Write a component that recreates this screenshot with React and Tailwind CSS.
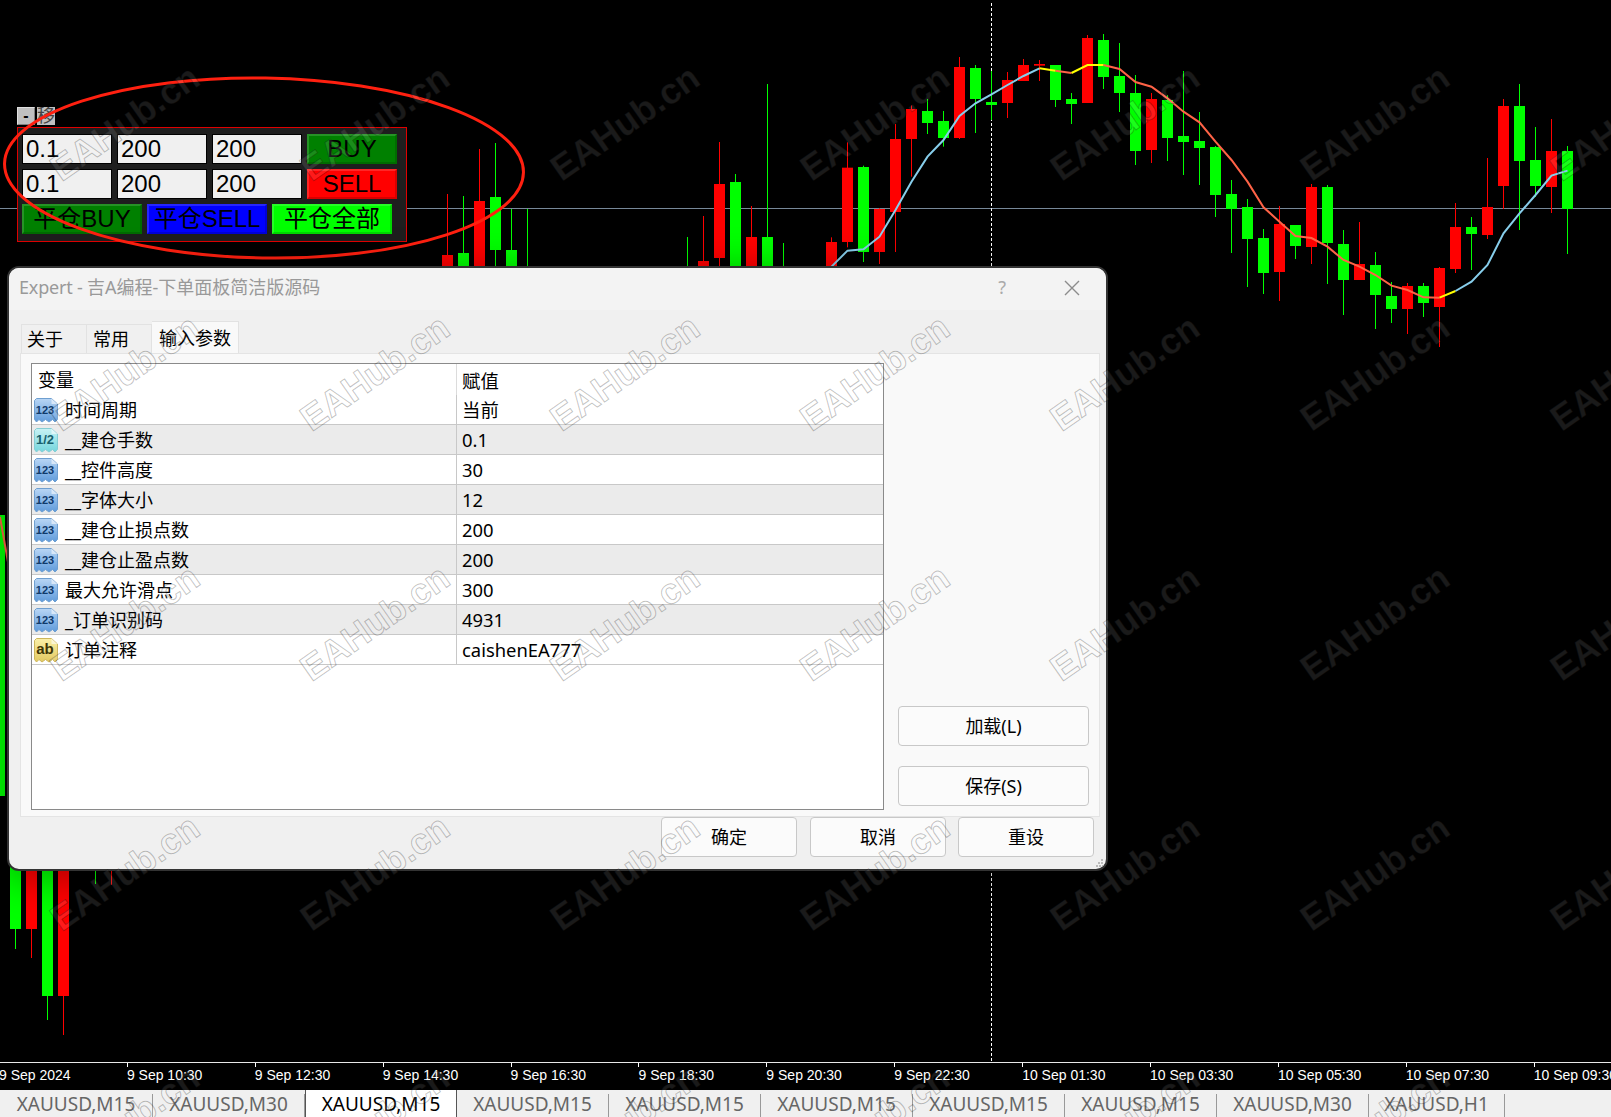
import React from 'react';

const UI_FONT = "font-['Noto_Sans','Noto_Sans_CJK_SC',sans-serif]";

// k = bar slot, one bar every 16px. [k, colour, body top, body bottom, wick top, wick bottom]
const leftBars = [
  [-1, 'g', 515, 796, 515, 796],
  [0, 'g', 860, 929, 860, 949],
  [1, 'r', 860, 929, 860, 958],
  [2, 'g', 860, 996, 860, 1020],
  [3, 'r', 860, 996, 860, 1035],
  [5, 'g', 860, 861, 860, 884],
  [6, 'r', 860, 861, 860, 885],
  [27, 'r', 255, 290, 194, 290],
  [28, 'g', 253, 290, 196, 290],
  [29, 'r', 201, 290, 149, 290],
  [30, 'g', 197, 250, 143, 290],
  [31, 'g', 250, 290, 209, 290],
  [32, 'g', 285, 290, 209, 290],
  [42, 'g', 285, 290, 237, 290],
  [43, 'r', 261, 290, 216, 290],
  [44, 'r', 184, 258, 142, 290],
  [45, 'g', 182, 290, 174, 290],
  [46, 'r', 237, 290, 206, 290],
  [47, 'g', 237, 290, 84, 290],
  [48, 'g', 285, 290, 243, 290],
];

// same shape, y values are x3 (read off a 3x crop), first one is k = 51
const rightBars = [
  ['r', 726, 860, 712, 860], ['r', 503, 726, 427, 742], ['g', 501, 756, 497, 786], ['r', 627, 756, 625, 792],
  ['r', 417, 636, 372, 756], ['r', 327, 417, 316, 530], ['g', 333, 369, 297, 402], ['g', 363, 414, 333, 440],
  ['r', 201, 414, 171, 417], ['g', 204, 297, 195, 399], ['g', 306, 315, 213, 360], ['r', 240, 309, 216, 354],
  ['r', 195, 243, 177, 243], ['r', 192, 197, 180, 243], ['g', 195, 300, 195, 321], ['g', 297, 312, 279, 372],
  ['r', 114, 309, 105, 309], ['g', 120, 231, 102, 267], ['g', 228, 279, 129, 336], ['g', 279, 453, 225, 495],
  ['r', 297, 450, 279, 489], ['g', 300, 414, 285, 483], ['g', 408, 426, 213, 525], ['g', 423, 444, 336, 555],
  ['g', 441, 585, 438, 651], ['g', 582, 627, 540, 759], ['g', 621, 717, 597, 861], ['g', 714, 819, 687, 882],
  ['r', 672, 816, 618, 903], ['g', 675, 738, 675, 777], ['r', 561, 741, 552, 792], ['g', 561, 729, 555, 852],
  ['g', 732, 840, 690, 945], ['r', 792, 840, 666, 840], ['g', 795, 885, 756, 987], ['g', 888, 927, 846, 969],
  ['r', 858, 927, 849, 1002], ['g', 858, 909, 849, 951], ['r', 804, 921, 801, 1041], ['r', 681, 807, 609, 819],
  ['g', 681, 702, 651, 810], ['r', 621, 705, 474, 717], ['r', 318, 558, 297, 627], ['g', 318, 483, 252, 690],
  ['g', 480, 558, 381, 591], ['r', 453, 561, 357, 639], ['g', 453, 627, 438, 762],
];

const bars = [
  ...leftBars,
  ...rightBars.map((b, i) => [51 + i, b[0], b[1] / 3, b[2] / 3, b[3] / 3, b[4] / 3]),
];

const px = (k) => 15.5 + 16 * k;
const line = (pts) => pts.map(([k, y]) => `${px(k)},${y / 3}`).join(' ');

const maSegments = [
  ['#87ceeb', [[51, 800], [52, 752], [53, 748], [54, 710], [55, 630], [56, 545], [57, 470], [58, 420], [59, 348], [60, 310], [61, 283], [62, 255], [63, 228], [64, 205]]],
  ['#ffff00', [[64, 205], [65, 212]]],
  ['#ff6347', [[65, 212], [66, 219]]],
  ['#ffff00', [[66, 219], [67, 195], [68, 195]]],
  ['#ff6347', [[68, 195], [69, 207], [70, 246], [71, 260], [72, 295], [73, 335], [74, 367], [75, 425], [76, 480], [77, 545], [78, 622], [79, 665], [80, 708], [81, 714], [82, 740], [83, 780], [84, 800], [85, 825], [86, 857], [87, 870], [88, 892], [89, 893]]],
  ['#ffff00', [[89, 893], [90, 873]]],
  ['#87ceeb', [[90, 873], [91, 845], [92, 795], [93, 700], [94, 640], [95, 585], [96, 527], [97, 512]]],
];

const params = [
  ['int', '时间周期', '当前'],
  ['dbl', '__建仓手数', '0.1'],
  ['int', '__控件高度', '30'],
  ['int', '__字体大小', '12'],
  ['int', '__建仓止损点数', '200'],
  ['int', '__建仓止盈点数', '200'],
  ['int', '最大允许滑点', '300'],
  ['int', '_订单识别码', '4931'],
  ['str', '订单注释', 'caishenEA777'],
];

const axisLabels = [
  '9 Sep 2024', '9 Sep 10:30', '9 Sep 12:30', '9 Sep 14:30', '9 Sep 16:30', '9 Sep 18:30', '9 Sep 20:30',
  '9 Sep 22:30', '10 Sep 01:30', '10 Sep 03:30', '10 Sep 05:30', '10 Sep 07:30', '10 Sep 09:30',
];

const chartTabs = [
  'XAUUSD,M15', 'XAUUSD,M30', 'XAUUSD,M15', 'XAUUSD,M15', 'XAUUSD,M15',
  'XAUUSD,M15', 'XAUUSD,M15', 'XAUUSD,M15', 'XAUUSD,M30', 'XAUUSD,H1',
];

const iconStyles = {
  int: { from: '#b9d6f5', to: '#5f9bdb', edge: '#6f9fd0', ink: '#0f3a6b', label: '123', size: 11 },
  dbl: { from: '#c8f2f4', to: '#74d6dd', edge: '#86cdd4', ink: '#17606e', label: '1/2', size: 13 },
  str: { from: '#fbf0a8', to: '#e2c960', edge: '#cdb65c', ink: '#3f3606', label: 'ab', size: 15 },
};

const ParamIcon = ({ type }) => {
  const s = iconStyles[type];
  const id = `icon-${type}-fill`;
  return (
    <svg width="24" height="25" viewBox="0 0 24 25" className="shrink-0 mt-[2px]">
      <defs>
        <linearGradient id={id} x1="0" y1="0" x2="0" y2="1">
          <stop offset="0" stopColor={s.from} />
          <stop offset="1" stopColor={s.to} />
        </linearGradient>
      </defs>
      <path
        d="M2.5 .5H17.5L23.5 6V21.5L21 24L18.5 21.5L15 24L11.5 21.5L8 24L5 21.5L2.5 24L.5 21.5V2.5Z"
        fill={`url(#${id})`}
        stroke={s.edge}
      />
      <path d="M17.5 .5V6H23.5Z" fill="#fff" opacity=".55" />
      <text x="11" y="16" textAnchor="middle" fontFamily="Liberation Sans" fontSize={s.size} fontWeight="700" fill={s.ink}>
        {s.label}
      </text>
    </svg>
  );
};

const PriceChart = () => (
  <svg className="absolute inset-0" width="1611" height="1062">
    <line x1="0" y1="208.5" x2="1611" y2="208.5" stroke="#778899" />
    <line x1="991.5" y1="3" x2="991.5" y2="1062" stroke="#fff" strokeDasharray="3 2" />
    {bars.map(([k, c, top, bottom, wickTop, wickBottom]) => {
      const fill = c === 'g' ? '#00ff00' : '#ff0000';
      return (
        <g key={k} fill={fill}>
          <rect x={15 + 16 * k} y={wickTop} width="1" height={wickBottom - wickTop} />
          <rect x={10 + 16 * k} y={top} width="11" height={bottom - top} />
        </g>
      );
    })}
    {maSegments.map(([color, pts], i) => (
      <polyline key={i} points={line(pts)} fill="none" stroke={color} strokeWidth="2" />
    ))}
    <polyline points="0,517 8,562" fill="none" stroke="#ff6347" strokeWidth="2" />
  </svg>
);

const NumberBox = ({ value }) => (
  <div className="w-[90px] h-[30px] pl-[3px] bg-[#f0f0f0] border border-black text-[24px] leading-[28px] text-black">{value}</div>
);

const TradeButton = ({ label, className }) => (
  <div className={`h-[30px] flex items-center justify-center border-2 border-t-white/15 border-l-white/15 border-r-black/15 border-b-black/15 text-[24px] leading-none text-black whitespace-nowrap ${className}`}>
    {label}
  </div>
);

const OrderPanel = () => (
  <>
    <div className="absolute left-[17px] top-[107px] flex gap-[2px] font-['Liberation_Sans','Noto_Sans_CJK_SC',sans-serif]">
      <div className="w-[18px] h-[18px] flex items-center justify-center bg-[#c0c0c0] border border-t-[#e0e0e0] border-l-[#e0e0e0] border-r-[#808080] border-b-[#808080] text-[16px] font-bold leading-none text-black">-</div>
      <div className="w-[18px] h-[18px] overflow-hidden bg-[#c0c0c0] text-[18px] leading-[18px] text-[#444]">移</div>
    </div>
    <div className="absolute left-[17px] top-[127px] w-[390px] h-[115px] pt-[6px] pl-1 flex flex-col gap-[5px] bg-[#1e1e1e] border border-[#e00000] font-['Liberation_Sans','Noto_Sans_CJK_SC',sans-serif]">
      <div className="flex gap-[5px]">
        <NumberBox value="0.1" />
        <NumberBox value="200" />
        <NumberBox value="200" />
        <TradeButton label="BUY" className="w-[90px] bg-[#008000]" />
      </div>
      <div className="flex gap-[5px]">
        <NumberBox value="0.1" />
        <NumberBox value="200" />
        <NumberBox value="200" />
        <TradeButton label="SELL" className="w-[90px] bg-[#ff0000]" />
      </div>
      <div className="flex gap-[5px]">
        <TradeButton label="平仓BUY" className="w-[120px] bg-[#008000]" />
        <TradeButton label="平仓SELL" className="w-[120px] bg-[#0000ff]" />
        <TradeButton label="平仓全部" className="w-[120px] bg-[#00ff00]" />
      </div>
    </div>
    <svg className="absolute left-0 top-[70px]" width="530" height="195">
      <ellipse cx="264" cy="98" rx="259.5" ry="90" fill="none" stroke="#ff2010" strokeWidth="3" transform="rotate(1 264 98)" />
    </svg>
  </>
);

const DialogButton = ({ label, className }) => (
  <div className={`h-[40px] flex items-center justify-center rounded-[4px] border border-[#c8c8c8] bg-[#fbfbfb] text-[18px] text-black ${className}`}>
    {label}
  </div>
);

const InputsTable = () => (
  <div className="w-[853px] border border-[#8a8a8a] bg-white text-[18px] text-black">
    <div className="h-[31px] flex leading-[33px]">
      <div className="w-[424px] pl-[6px]">变量</div>
      <div className="flex-1 pl-[5px] border-l border-[#dcdcdc] text-[18.4px]">赋值</div>
    </div>
    {params.map(([type, name, value], i) => (
      <div key={name} className={`h-[30px] flex items-center border-b border-[#c8c8c8] ${i % 2 === 1 ? 'bg-[#ebebeb]' : 'bg-white'}`}>
        <div className="w-[424px] h-full flex items-center pl-[2px] gap-[7px]">
          <ParamIcon type={type} />
          <span className="pt-[2px]">{name}</span>
        </div>
        <div className="flex-1 h-full pl-[5px] flex items-center border-l border-[#c8c8c8] text-[18.4px]">{value}</div>
      </div>
    ))}
  </div>
);

const SettingsDialog = () => (
  <div className={`absolute left-[7px] top-[266px] w-[1101px] h-[605px] flex flex-col rounded-[12px] border-2 border-[#333] bg-[#f0f0f0] shadow-[0_6px_40px_rgba(0,0,0,0.35)] overflow-hidden ${UI_FONT}`}>
    <div className="h-[42px] shrink-0 flex items-center pl-[10px] pb-[3px] bg-[#f3f3f3] text-[18px] text-[#999]">
      <span className="flex-1"><span className="tracking-[-0.2px]">Expert - </span>吉A编程-下单面板简洁版源码</span>
      <span className="mr-[58px] text-[#aaa]">?</span>
      <svg width="16" height="16" viewBox="0 0 16 16" className="mr-[26px]">
        <path d="M1 1L15 15M15 1L1 15" stroke="#8c8c8c" strokeWidth="1.4" fill="none" />
      </svg>
    </div>
    <div className="h-[43px] shrink-0 flex items-end pl-[12px] text-[18px] text-black">
      <div className="w-[66px] h-[29px] pl-[5px] border border-b-0 border-[#e2e2e2] bg-[#f0f0f0] leading-[28px]">关于</div>
      <div className="w-[65px] h-[29px] pl-[6px] border-t border-r border-[#e2e2e2] bg-[#f0f0f0] leading-[29px]">常用</div>
      <div className="w-[87px] h-[32px] pl-[7px] border-t border-r border-[#e2e2e2] bg-[#f9f9f9] leading-[33px]">输入参数</div>
    </div>
    <div className="mx-[11px] w-[1080px] h-[464px] shrink-0 flex pl-[10px] pt-[9px] pb-[6px] gap-[14px] border border-[#e4e4e4] bg-[#f9f9f9]">
      <InputsTable />
      <div className="w-[191px] mb-[4px] flex flex-col justify-end gap-[20px]">
        <DialogButton label="加载(L)" />
        <DialogButton label="保存(S)" />
      </div>
    </div>
    <div className="flex justify-end gap-[12px] pr-[12px]">
      <DialogButton label="确定" className="w-[136px] mr-[1px]" />
      <DialogButton label="取消" className="w-[136px]" />
      <DialogButton label="重设" className="w-[136px]" />
    </div>
    <svg width="8" height="8" className="absolute right-[2px] bottom-[2px]" fill="#bbb">
      <rect x="5" y="0" width="2" height="2" />
      <rect x="2" y="3" width="2" height="2" />
      <rect x="5" y="3" width="2" height="2" />
      <rect x="0" y="6" width="2" height="2" />
      <rect x="3" y="6" width="2" height="2" />
      <rect x="6" y="6" width="2" height="2" />
    </svg>
  </div>
);

const Watermarks = () => (
  <div className="absolute inset-0 overflow-hidden pointer-events-none">
    <div className="-mt-[2px] w-[1750px] grid grid-cols-[repeat(7,250px)] auto-rows-[250px]">
      {Array.from({ length: 35 }, (_, i) => (
        <div key={i} className="flex items-center justify-center">
          <span className="-rotate-[35deg] whitespace-nowrap font-['Liberation_Sans',sans-serif] font-bold text-[36px] text-white/10 [-webkit-text-stroke:1px_rgba(0,0,0,0.25)]">
            EAHub.cn
          </span>
        </div>
      ))}
    </div>
  </div>
);

const App = () => (
  <div className="relative w-[1611px] h-[1117px] flex flex-col overflow-hidden bg-black">
    <div className="relative h-[1062px] shrink-0">
      <PriceChart />
      <OrderPanel />
      <SettingsDialog />
    </div>
    <div className="h-[28px] shrink-0 flex -ml-[1px] border-t border-[#e8e8e8] font-['Liberation_Sans',sans-serif] text-[14px] leading-none text-white">
      {axisLabels.map((label) => (
        <div key={label} className="w-[127.9px] shrink-0">
          <div className="w-px h-[4px] bg-white" />
          <div className="pt-[1px] whitespace-nowrap">{label}</div>
        </div>
      ))}
    </div>
    <div className={`flex-1 flex bg-[#f0f0f0] text-[19px] leading-none ${UI_FONT}`}>
      {chartTabs.map((name, i) => (
        <div
          key={i}
          className={`h-full ${i === 0 ? 'w-[153px]' : i === 9 ? 'w-[136px]' : 'w-[152px]'} ${
            i === 2 ? 'bg-white text-black border-x border-[#555]' : 'pt-[4px] text-[#666]'
          }`}
        >
          <div className={`h-full flex items-center justify-center pb-[2px] ${i === 2 ? 'pt-[4px]' : 'border-r border-[#999]'}`}>
            {name}
          </div>
        </div>
      ))}
    </div>
    <Watermarks />
  </div>
);

export default App;
